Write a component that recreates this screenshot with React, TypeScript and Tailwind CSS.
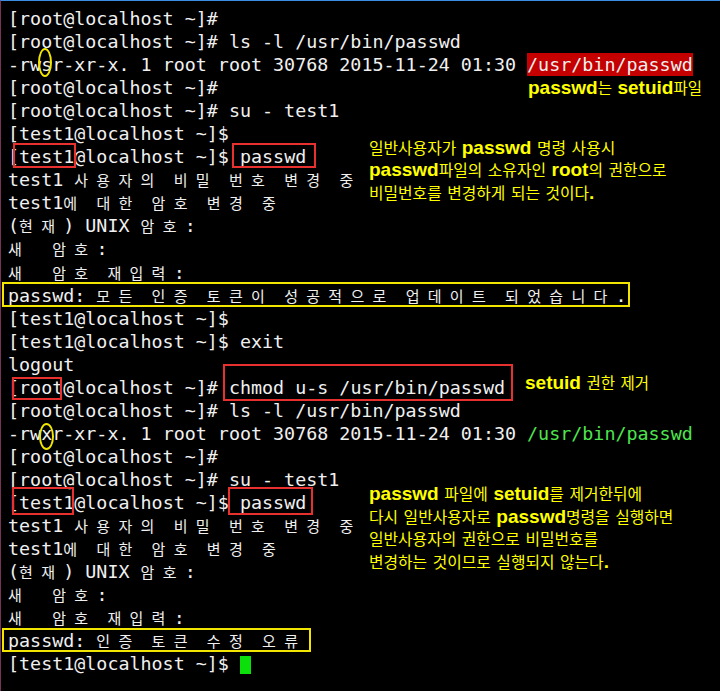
import React from "react";

// terminal text: ascii in mono cells, hangul in double-width cells
const Term: React.FC<{ text: string }> = ({ text }) => {
  const parts: React.ReactNode[] = [];
  let buf = "";
  Array.from(text).forEach((ch, i) => {
    if (ch.charCodeAt(0) > 0x2000) {
      if (buf) {
        parts.push(buf);
        buf = "";
      }
      parts.push(
        <span key={i} className="inline-block w-[22.1px] align-top text-[15px] font-['Noto_Sans_CJK_KR',sans-serif]">
          {ch}
        </span>
      );
    } else {
      buf += ch;
    }
  });
  if (buf) parts.push(buf);
  return <>{parts}</>;
};

// marker drawn over a piece of terminal text
const Mark: React.FC<{ text: string; box: string }> = ({ text, box }) => (
  <span className="relative inline-block">
    <Term text={text} />
    <span className={`pointer-events-none absolute ${box}`} />
  </span>
);

const Row: React.FC<{ children: React.ReactNode }> = ({ children }) => (
  <div className="h-[23.05px] whitespace-pre leading-[23.05px]">{children}</div>
);

const B: React.FC<{ children: React.ReactNode }> = ({ children }) => (
  <span className="font-['Liberation_Sans',sans-serif] text-[19px] font-bold">{children}</span>
);

const App: React.FC = () => {
  return (
    <div className="relative h-[691px] w-[720px] overflow-hidden border-t border-l border-t-[#3b8de4] border-l-[#7a3356] bg-black pt-[6px] pl-[7px] font-['DejaVu_Sans_Mono',monospace] text-[18.35px] text-[#f0f0f0]">
      <Row><Term text="[root@localhost ~]#" /></Row>
      <Row><Term text="[root@localhost ~]# ls -l /usr/bin/passwd" /></Row>
      <Row>
        -rw
        <Mark text="s" box="-left-[3px] right-0 -top-[5px] -bottom-[1px] rounded-[50%] border-2 border-[#f2e600]" />
        r-xr-x. 1 root root 30768 2015-11-24 01:30{" "}
        <span className="inline-block bg-[#c40000]">/usr/bin/passwd</span>
      </Row>
      <Row>
        <span className="inline-block w-[520px]">[root@localhost ~]#</span>
        <span className="font-['Noto_Sans_CJK_KR',sans-serif] text-[15.5px] text-[#ffff00] [word-spacing:2px]">
          <B>passwd</B>는 <B>setuid</B>파일
        </span>
      </Row>
      <Row><Term text="[root@localhost ~]# su - test1" /></Row>
      <Row><Term text="[test1@localhost ~]$" /></Row>
      <Row>
        [
        <Mark text="test1" box="-left-[6px] -right-[2px] -top-[2px] bottom-0 border-2 border-[#e8312f]" />
        @localhost ~]${" "}
        <Mark text="passwd" box="-left-[8px] -right-[10px] -top-[2px] bottom-0 border-2 border-[#e8312f]" />
      </Row>
      <Row><Term text="test1 사용자의 비밀 번호 변경 중" /></Row>
      <Row><Term text="test1에 대한 암호 변경 중" /></Row>
      <Row><Term text="(현재) UNIX 암호:" /></Row>
      <Row><Term text="새  암호:" /></Row>
      <Row><Term text="새  암호 재입력:" /></Row>
      <Row>
        <Mark
          text="passwd: 모든 인증 토큰이 성공적으로 업데이트 되었습니다."
          box="-left-[6px] -right-[3px] -top-[2px] bottom-0 border-2 border-[#f2e600]"
        />
      </Row>
      <Row><Term text="[test1@localhost ~]$" /></Row>
      <Row><Term text="[test1@localhost ~]$ exit" /></Row>
      <Row><Term text="logout" /></Row>
      <Row>
        [
        <Mark text="root" box="-left-[7px] right-[1px] top-[1px] -bottom-[1px] border-2 border-[#e8312f]" />
        @localhost ~]#{" "}
        <Mark text="chmod u-s /usr/bin/passwd" box="-left-[6px] -right-[8px] -top-[12px] -bottom-[2px] border-2 border-[#e8312f]" />
        <span className="relative -top-[5px] ml-[20px] font-['Noto_Sans_CJK_KR',sans-serif] text-[15.5px] text-[#ffff00] [word-spacing:2px]">
          <B>setuid</B> 권한 제거
        </span>
      </Row>
      <Row><Term text="[root@localhost ~]# ls -l /usr/bin/passwd" /></Row>
      <Row>
        -rw
        <Mark text="x" box="-left-[2px] -right-[2px] top-[1px] -bottom-[5px] rounded-[50%] border-2 border-[#f2e600]" />
        r-xr-x. 1 root root 30768 2015-11-24 01:30{" "}
        <span className="text-[#4fe44f]">/usr/bin/passwd</span>
      </Row>
      <Row><Term text="[root@localhost ~]#" /></Row>
      <Row><Term text="[root@localhost ~]# su - test1" /></Row>
      <Row>
        [
        <Mark text="test1" box="-left-[7px] right-0 -top-[4px] -bottom-[1px] border-2 border-[#e8312f]" />
        @localhost ~]${" "}
        <Mark text="passwd" box="-left-[12px] -right-[7px] -top-[4px] -bottom-[1px] border-2 border-[#e8312f]" />
      </Row>
      <Row><Term text="test1 사용자의 비밀 번호 변경 중" /></Row>
      <Row><Term text="test1에 대한 암호 변경 중" /></Row>
      <Row><Term text="(현재) UNIX 암호:" /></Row>
      <Row><Term text="새  암호:" /></Row>
      <Row><Term text="새  암호 재입력:" /></Row>
      <Row>
        <Mark text="passwd: 인증 토큰 수정 오류" box="-left-[6px] -right-[5px] -top-[1px] bottom-0 border-2 border-[#f2e600]" />
      </Row>
      <Row>
        [test1@localhost ~]${" "}
        <span className="inline-block h-[18px] w-[11px] bg-[#0be00b] align-[-4px]" />
      </Row>

      {/* callouts written over the capture */}
      <div className="absolute left-[368px] top-[136px] whitespace-pre font-['Noto_Sans_CJK_KR',sans-serif] text-[15.8px] leading-[22.3px] text-[#ffff00] [word-spacing:2px]">
        <div>일반사용자가 <B>passwd</B> 명령 사용시</div>
        <div><B>passwd</B>파일의 소유자인 <B>root</B>의 권한으로</div>
        <div>비밀번호를 변경하게 되는 것이다<B>.</B></div>
      </div>
      <div className="absolute left-[368px] top-[482px] whitespace-pre font-['Noto_Sans_CJK_KR',sans-serif] text-[15.8px] leading-[22.7px] text-[#ffff00] [word-spacing:2px]">
        <div><B>passwd</B> 파일에 <B>setuid</B>를 제거한뒤에</div>
        <div>다시 일반사용자로 <B>passwd</B>명령을 실행하면</div>
        <div>일반사용자의 권한으로 비밀번호를</div>
        <div>변경하는 것이므로 실행되지 않는다<B>.</B></div>
      </div>
    </div>
  );
};

export default App;
